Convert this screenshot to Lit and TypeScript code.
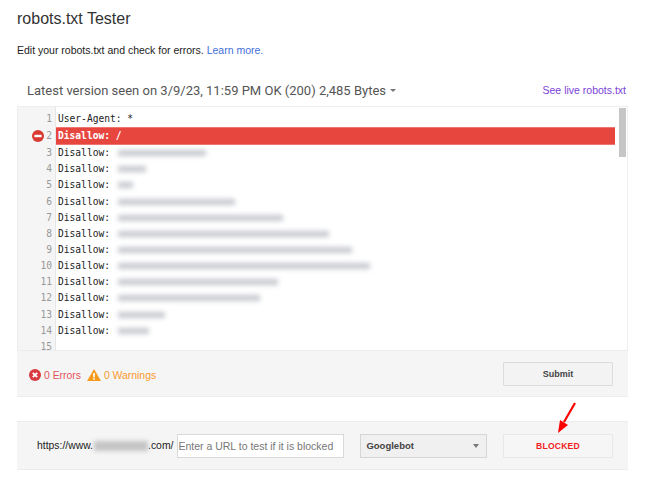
import { LitElement, html, css } from "lit";
import { customElement } from "lit/decorators.js";

const redacted: Record<number, number> = {
  3: 88, 4: 28, 5: 15, 6: 117, 7: 165, 8: 211, 9: 234, 10: 252, 11: 160, 12: 142, 13: 47, 14: 31,
};
const lines = Array.from({ length: 15 }, (_, i) => i + 1);

@customElement("app-root")
export class AppRoot extends LitElement {
  static styles = css`
    :host {
      display: block;
      position: relative;
      width: 650px;
      height: 481px;
      overflow: hidden;
      background: #fff;
      font-family: "Liberation Sans", Arial, sans-serif;
      color: #222;
    }
    .page { display: flex; flex-direction: column; padding: 0 22px 0 17px; }
    h1 { margin: 9px 0 0; font-size: 16px; line-height: 19px; font-weight: 400; color: #333; }
    .desc { margin: 16px 0 0; font-size: 10.5px; line-height: 13px; color: #222; }
    .desc a { color: #3f6fd8; }
    .head { display: flex; justify-content: space-between; align-items: center; height: 20px; margin-top: 23px; padding: 0 2px 0 10px; }
    .version { font-family: Roboto, "Liberation Sans", sans-serif; font-size: 13px; color: #555; display: flex; align-items: center; gap: 4px; }
    .caret { width: 0; height: 0; border: 3px solid transparent; border-top: 3px solid #777; border-bottom: 0; }
    .live { font-size: 10.5px; color: #7a3fd6; }
    .editor { display: flex; height: 244px; margin-top: 6px; border: 1px solid #efefef; border-bottom: 0; overflow: hidden; box-sizing: border-box; }
    .gutter { width: 37px; flex: none; background: #f5f5f5; border-right: 1px solid #e6e6e6; padding-top: 4px; box-sizing: content-box; }
    .num {
      height: 16.15px; line-height: 16.15px; display: flex; justify-content: flex-end; align-items: center; gap: 2px; padding-right: 3px;
      font: 9.6px/16.15px "DejaVu Sans Mono", monospace; color: #999;
    }
    .num.err-num { height: 18px; }
    .num svg { display: block; }
    .code { flex: 1; min-width: 0; padding-top: 4px; }
    .code-row { display: flex; align-items: center; height: 16.15px; padding-left: 2px; margin-right: 4px; font: 9.6px/16.15px "DejaVu Sans Mono", monospace; color: #222; white-space: pre; }
    .code-row.err { height: 18px; background: #e7463f; color: #fff; font-weight: 700; border-top: 1px solid #ee7570; border-bottom: 1px solid #ee7570; box-sizing: border-box; }
    .redact { display: block; height: 6px; margin-left: 8px; background: #c6c9cf; filter: blur(2.4px); }
    .scroll { width: 7px; height: 49px; flex: none; margin: 1px 1px 0 0; background: #c6c6c6; }
    .bar { display: flex; align-items: center; justify-content: space-between; background: #f5f5f5; border-bottom: 1px solid #ececec; border-top: 1px solid #ececec; box-sizing: border-box; }
    .foot { height: 47px; padding: 0 15px 0 12px; }
    .status { display: flex; align-items: center; font-size: 10.4px; margin-top: 3px; }
    .status svg { display: block; }
    .errs { color: #e2525a; margin: 0 6px 0 3px; }
    .warns { color: #f59a2e; margin-left: 3px; }
    .btn { width: 110px; height: 24px; box-sizing: border-box; border: 1px solid #dcdcdc; background: #f3f3f3; display: flex; align-items: center; justify-content: center; font-size: 9px; font-weight: 700; color: #444; border-radius: 1px; }
    .test { height: 49px; margin-top: 24px; padding: 0 15px 0 20px; }
    .url { display: flex; align-items: center; font-size: 10.4px; color: #222; }
    .blur { display: block; width: 54px; height: 10px; margin: 0 0 0 1px; background: #c4c4c4; filter: blur(2px); }
    .input { width: 167px; height: 24px; margin-left: 4px; box-sizing: border-box; border: 1px solid #d9d9d9; background: #fff; display: flex; align-items: center; padding-left: 0; font-size: 10.5px; color: #777; white-space: nowrap; overflow: hidden; }
    .group { display: flex; align-items: center; }
    .select { width: 127px; height: 24px; margin-left: 16px; box-sizing: border-box; border: 1px solid #d6d6d6; background: #f0f0f0; display: flex; align-items: center; justify-content: space-between; padding: 0 7px 0 5px; font-size: 9.5px; font-weight: 700; color: #444; }
    .sel-caret { width: 0; height: 0; border: 3.5px solid transparent; border-top: 4px solid #777; border-bottom: 0; }
    .blocked { color: #f01c1c; background: #f6f6f6; border-color: #e8e8e8; font-size: 8.6px; letter-spacing: 0.2px; }
    .arrow { position: absolute; left: 550px; top: 398px; display: block; }
  `;

  render() {
    return html`
      <div class="page">
        <h1>robots.txt Tester</h1>
        <p class="desc">Edit your robots.txt and check for errors. <a>Learn more.</a></p>
        <div class="head">
          <div class="version">Latest version seen on 3/9/23, 11:59 PM OK (200) 2,485 Bytes <span class="caret"></span></div>
          <a class="live">See live robots.txt</a>
        </div>
        <div class="editor">
          <div class="gutter">
            ${lines.map(
              (n) => html`<div class="num ${n === 2 ? "err-num" : ""}">
                ${n === 2
                  ? html`<svg width="12" height="12" viewBox="0 0 12 12"><circle cx="6" cy="6" r="6" fill="#d93a32"/><rect x="2.4" y="4.8" width="7.2" height="2.4" fill="#fff"/></svg>`
                  : ""}${n}
              </div>`
            )}
          </div>
          <div class="code">
            ${lines.map((n) => {
              if (n === 1) return html`<div class="code-row">User-Agent: *</div>`;
              if (n === 2) return html`<div class="code-row err">Disallow: /</div>`;
              if (n === 15) return html`<div class="code-row"></div>`;
              return html`<div class="code-row">Disallow:<span class="redact" style="width:${redacted[n]}px"></span></div>`;
            })}
          </div>
          <div class="scroll"></div>
        </div>
        <div class="bar foot">
          <div class="status">
            <svg width="12" height="12" viewBox="0 0 12 12"><circle cx="6" cy="6" r="6" fill="#d93a40"/><path d="M3.8 3.8l4.4 4.4M8.2 3.8l-4.4 4.4" stroke="#fff" stroke-width="1.8"/></svg>
            <span class="errs">0 Errors</span>
            <svg width="14" height="12" viewBox="0 0 14 12"><path d="M7 0L14 12H0Z" fill="#f59a1c"/><rect x="6.2" y="4" width="1.6" height="4.4" fill="#fff"/><rect x="6.2" y="9.2" width="1.6" height="1.5" fill="#fff"/></svg>
            <span class="warns">0 Warnings</span>
          </div>
          <div class="btn">Submit</div>
        </div>
        <div class="bar test">
          <div class="group">
            <div class="url">https://www.<span class="blur"></span>.com/</div>
            <div class="input">Enter a URL to test if it is blocked</div>
            <div class="select">Googlebot<span class="sel-caret"></span></div>
          </div>
          <div class="btn blocked">BLOCKED</div>
        </div>
      </div>
      <svg class="arrow" width="32" height="40" viewBox="0 0 32 40">
        <path d="M25 5L14 24" stroke="#f00" stroke-width="2.2" fill="none"/>
        <path d="M8 35L10 22L18 27Z" fill="#f00"/>
      </svg>
    `;
  }
}
